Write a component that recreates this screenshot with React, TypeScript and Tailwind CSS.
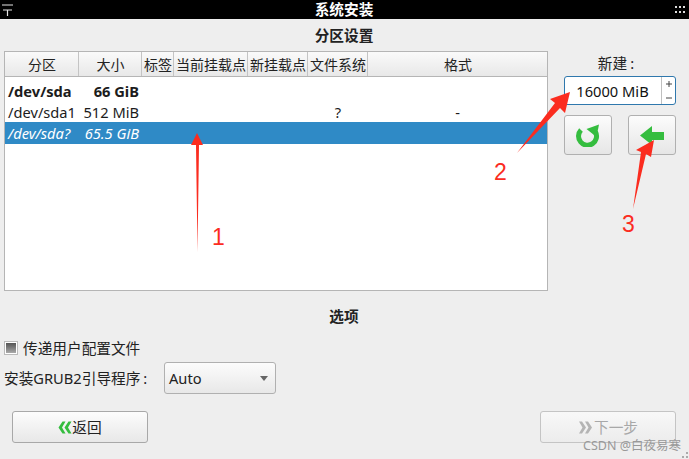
const FONT = "font-['Noto_Sans','Noto_Sans_CJK_SC',sans-serif]";

const COLUMNS = [
  { label: "分区", width: "w-[74px]" },
  { label: "大小", width: "w-[63px]" },
  { label: "标签", width: "w-[32px]" },
  { label: "当前挂载点", width: "w-[74px]" },
  { label: "新挂载点", width: "w-[60px]" },
  { label: "文件系统", width: "w-[60px]" },
  { label: "格式", width: "flex-1" },
];

function Row({ name, size, fs, format, className }: { name: string; size: string; fs?: string; format?: string; className: string }) {
  return (
    <div className={`flex items-center ${className}`}>
      <div className="w-[74px] pl-[3px] whitespace-nowrap">{name}</div>
      <div className="w-[63px] pr-[3px] text-right whitespace-nowrap">{size}</div>
      <div className="w-[166px]" />
      <div className="w-[60px] text-center">{fs}</div>
      <div className="flex-1 text-center">{format}</div>
    </div>
  );
}

function PartitionTable() {
  return (
    <div className="w-[544px] h-[240px] border border-[#b5b5b5] bg-white flex flex-col">
      <div className="h-[25px] flex border-b border-[#b5b5b5] bg-gradient-to-b from-[#fafafa] to-[#e8e8e8] text-[14px] text-[#222]">
        {COLUMNS.map((col) => (
          <div
            key={col.label}
            className={`${col.width} pl-[1px] flex items-center justify-center whitespace-nowrap border-r border-[#c4c4c4] last:border-r-0`}
          >
            {col.label}
          </div>
        ))}
      </div>
      <div className="pt-[3px] text-[14.67px] text-[#1c1c1c]">
        <Row name="/dev/sda" size="66 GiB" className="h-[22px] font-bold" />
        <Row name="/dev/sda1" size="512 MiB" fs="?" format="-" className="h-[20px]" />
        <Row name="/dev/sda?" size="65.5 GiB" className="h-[22px] bg-[#2f8ac6] text-white italic" />
      </div>
    </div>
  );
}

function SidePanel() {
  return (
    <div className="ml-[16px] w-[112px] flex flex-col">
      <div className="h-[25px] text-center text-[14.67px] text-[#222] leading-[25px]">
        新建<span className="ml-[3px] mr-[8px]">:</span>
      </div>
      <div className="h-[29px] flex border border-[#2f78ad] rounded-[3px] bg-white text-[14.67px] text-[#111]">
        <div className="flex-1 flex items-center justify-center pr-[1px]">16000 MiB</div>
        <div className="w-[14px] border-l border-[#c0c0c0] flex flex-col items-center justify-center gap-[8px]">
          <svg width="6" height="6" viewBox="0 0 6 6" stroke="#444" strokeWidth="1">
            <path d="M0 3 H6 M3 0 V6" />
          </svg>
          <svg width="6" height="6" viewBox="0 0 6 6" stroke="#444" strokeWidth="1">
            <path d="M0 3 H6" />
          </svg>
        </div>
      </div>
      <div className="mt-[10px] flex justify-between">
        <button className="w-[48px] h-[40px] border border-[#b0b0b0] rounded-[3px] bg-gradient-to-b from-[#fcfcfc] to-[#e6e6e6] flex items-center justify-center">
          <svg width="24" height="24" viewBox="0 0 24 24">
            <path d="M5 7 A9 9 0 1 0 19.5 9" fill="none" stroke="#35bd3f" strokeWidth="5" />
            <path d="M10.5 6 L23 1.5 L20.5 14 Z" fill="#35bd3f" />
          </svg>
        </button>
        <button className="w-[48px] h-[40px] border border-[#b0b0b0] rounded-[3px] bg-gradient-to-b from-[#fcfcfc] to-[#e6e6e6] flex items-center justify-center">
          <svg width="24" height="19" viewBox="0 0 24 19">
            <path d="M0 9.5 L12 0 L12 6 L24 6 L24 14 L12 14 L12 19 Z" fill="#35bd3f" />
          </svg>
        </button>
      </div>
    </div>
  );
}

function Annotations() {
  return (
    <svg className="absolute left-0 top-0 pointer-events-none" width="689" height="459" viewBox="0 0 689 459">
      <g fill="#fb2c1f">
        <path d="M197 133 L203 145 L199 145 L197.5 252 L196 145 L191 145 Z" />
        <path d="M570 92 L565 113 L560 108 L517 153 L555 103 L550 99 Z" />
        <path d="M654 140 L651 157 L646 154 L633 209 L641 152 L636 150 Z" />
      </g>
      <g fill="#fb2c1f" fontSize="23" fontFamily="'Liberation Sans', sans-serif">
        <text x="212" y="245">1</text>
        <text x="494" y="180">2</text>
        <text x="622" y="232">3</text>
      </g>
    </svg>
  );
}

export default function App() {
  return (
    <div className={`relative w-[689px] h-[459px] overflow-hidden bg-[#eeeeee] flex flex-col ${FONT}`}>
      <div className="h-[19px] bg-black text-white flex items-center justify-between pl-[2px] pr-[4px] text-[14.67px]">
        <svg width="11" height="12" viewBox="0 0 11 12" stroke="#e4e4e4" strokeWidth="1.2">
          <path d="M0 1 H11 M1 6 H10 M5.5 6 V12" />
        </svg>
        <span className="font-bold leading-none">系统安装</span>
        <svg width="10" height="8" viewBox="0 0 10 8" fill="#ddd">
          <path d="M0 0h2v2H0zM4 0h2v2H4zM8 0h2v2H8zM0 5h2v2H0zM4 5h2v2H4zM8 5h2v2H8z" />
        </svg>
      </div>
      <div className="h-[32px] pr-[1px] flex items-center justify-center text-[14.67px] font-bold text-[#222]">分区设置</div>
      <div className="flex pl-[4px]">
        <PartitionTable />
        <SidePanel />
      </div>
      <div className="mt-[15px] pr-[1px] text-center text-[14.67px] font-bold text-[#222] leading-[20px]">选项</div>
      <div className="mt-[12px] pl-[4px] h-[20px] flex items-center text-[14.67px] text-[#222]">
        <span className="w-[14px] h-[14px] border border-[#bbb] bg-white flex items-center justify-center">
          <span className="w-[10px] h-[10px] bg-gradient-to-b from-[#555] to-[#aaa]" />
        </span>
        <span className="ml-[5px]">传递用户配置文件</span>
      </div>
      <div className="mt-[4px] pl-[4px] flex items-center text-[14.67px] text-[#222]">
        <span className="w-[160px] whitespace-nowrap">
          安装GRUB2引导程序<span className="ml-[3px]">:</span>
        </span>
        <div className="w-[112px] h-[32px] border border-[#b0b0b0] rounded-[3px] bg-gradient-to-b from-[#fcfcfc] to-[#e8e8e8] flex items-center justify-between pl-[4px] pr-[7px]">
          <span>Auto</span>
          <span className="w-0 h-0 border-x-[4px] border-x-transparent border-t-[5px] border-t-[#666]" />
        </div>
      </div>
      <div className="mt-[17px] pl-[12px] pr-[13px] flex justify-between text-[14.67px]">
        <button className="w-[136px] h-[32px] border border-[#a8a8a8] rounded-[3px] bg-gradient-to-b from-[#fcfcfc] to-[#e8e8e8] flex items-center justify-center text-[#222]">
          <svg width="14" height="13" viewBox="0 0 14 13" fill="#35bd3f">
            <path d="M4.5 0.5 L7.5 0.5 L4 6.5 L7.5 12.5 L4.5 12.5 L0.5 6.5 Z M10.5 0.5 L13.5 0.5 L10 6.5 L13.5 12.5 L10.5 12.5 L6.5 6.5 Z" />
          </svg>
          <span>返回</span>
        </button>
        <button className="w-[136px] h-[32px] border border-[#c4c4c4] rounded-[3px] bg-gradient-to-b from-[#f8f8f8] to-[#ececec] flex items-center justify-center text-[#a8a8a8]">
          <svg width="14" height="13" viewBox="0 0 14 13" fill="#b4b4b4">
            <path d="M1 0.5 L4 0.5 L8 6.5 L4 12.5 L1 12.5 L4.5 6.5 Z M7 0.5 L10 0.5 L14 6.5 L10 12.5 L7 12.5 L10.5 6.5 Z" />
          </svg>
          <span className="ml-[2px]">下一步</span>
        </button>
      </div>
      <div className="absolute right-[8px] bottom-[7px] text-[12.5px] leading-none text-[#999] whitespace-nowrap">CSDN @白夜易寒</div>
      <svg className="absolute right-[1px] bottom-[1px]" width="6" height="6" viewBox="0 0 6 6" fill="#aaa">
        <path d="M4 0h2v2H4zM0 4h2v2H0zM4 4h2v2H4z" />
      </svg>
      <Annotations />
    </div>
  );
}
